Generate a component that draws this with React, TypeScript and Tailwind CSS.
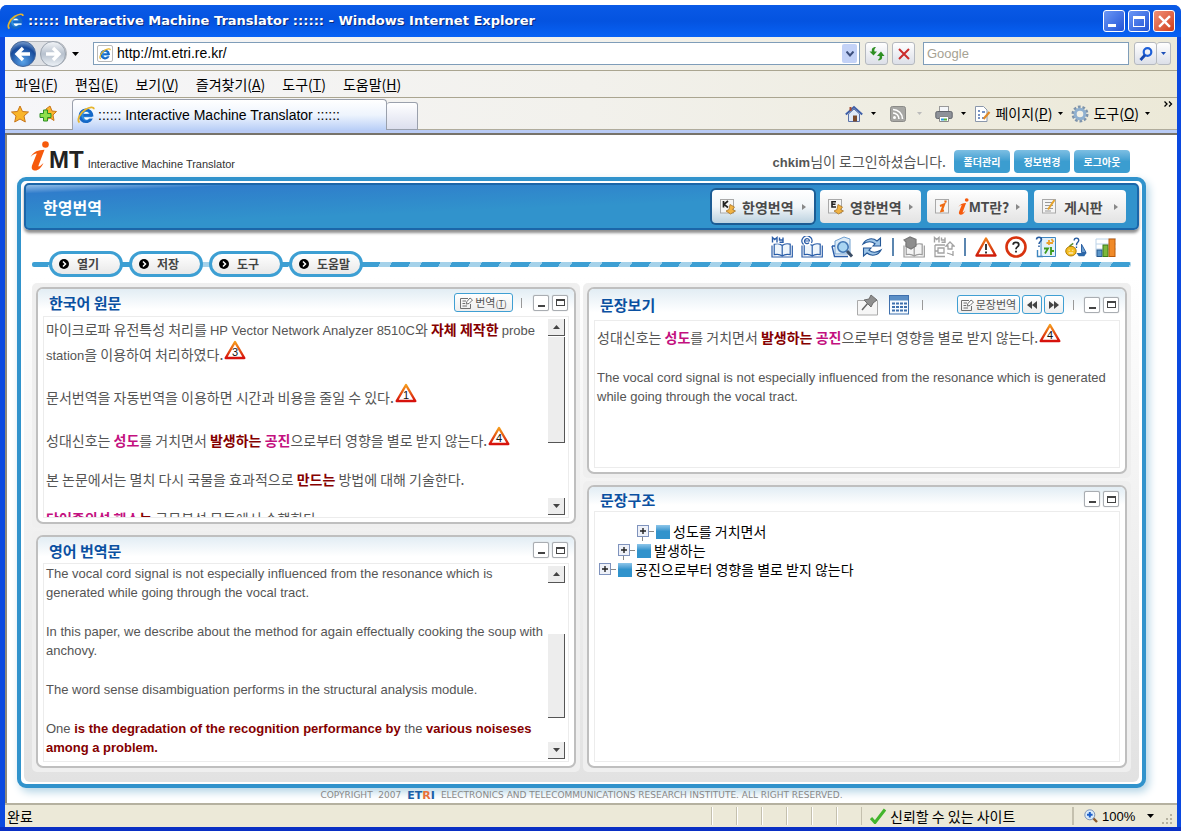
import type { ReactNode } from "react";

const KR = "font-['Noto_Sans_CJK_KR',sans-serif]";
const EN = "font-['Liberation_Sans',sans-serif]";

function IeLogo({ className }: { className?: string }) {
  return (
    <svg viewBox="0 0 18 18" className={className} aria-hidden="true">
      <circle cx="9" cy="9.500" r="6.500" fill="#2f8fe0" />
      <path d="M14.600 12A6 6 0 1 1 15 9.300H6.500" fill="none" stroke="#1668c7" strokeWidth="2.600" />
      <path d="M6.500 7.800C7 5.500 11.500 5.500 12 7.800Z" fill="#fff" />
      <path d="M7 11.200H15.500V12.500H12C10.500 14.500 7.500 14 7 11.200Z" fill="#fff" />
      <path d="M2.500 16.500C-.5 14 3 7 8.500 3.500C12.500 1 17 .3 16.800 3.200" fill="none" stroke="#e7b52c" strokeWidth="1.800" />
    </svg>
  );
}

function ItalicI({ className }: { className?: string }) {
  return (
    <svg viewBox="0 0 20 30" className={className} aria-hidden="true">
      <ellipse cx="16.500" cy="3.500" rx="3.300" ry="3.200" fill="#f65a0c" />
      <path d="M1.500 16C5 10.500 9 9 15.500 8.800L9.500 24.500C9 26.300 10.500 26 14.500 22C12 27.500 8.500 30 5.500 29.500C2.500 29 2.200 26.500 3.400 23.500L7.800 12.500C5.500 12.500 3.500 14 1.500 16Z" fill="#f65a0c" />
    </svg>
  );
}

function Arrow({ className = "fill-black" }: { className?: string }) {
  return (
    <svg viewBox="0 0 7 4" className={`h-1 w-[7px] shrink-0 ${className}`} aria-hidden="true">
      <path d="M0 0H7L3.500 4Z" />
    </svg>
  );
}

function SmallArrow({ className = "fill-black" }: { className?: string }) {
  return (
    <svg viewBox="0 0 5 3" className={`h-[3px] w-[5px] shrink-0 ${className}`} aria-hidden="true">
      <path d="M0 0H5L2.500 3Z" />
    </svg>
  );
}

function Warn({ n }: { n: string }) {
  return (
    <svg viewBox="0 0 22 20" className="-mt-3 ml-px inline-block h-5 w-[22px] align-baseline" role="img" aria-label={n}>
      <defs>
        <linearGradient id={`warn${n}`} x1="0" y1="0" x2="0" y2="1">
          <stop offset="0" stopColor="#f59a1b" />
          <stop offset="1" stopColor="#d6100c" />
        </linearGradient>
      </defs>
      <path d="M11 2L20.300 18H1.700Z" fill="#fff" stroke={`url(#warn${n})`} strokeWidth="2.400" strokeLinejoin="round" />
      <text x="11" y="15.500" textAnchor="middle" fontSize="11" fontFamily="Liberation Sans, sans-serif" fill="#111">{n}</text>
    </svg>
  );
}

function Book({ color, page = "#eef5fb", top }: { color: string; page?: string; top: ReactNode }) {
  return (
    <svg viewBox="0 0 22 22" className="h-[22px] w-[22px]" fill="none" stroke={color} strokeWidth="1.200">
      <path d="M1 9.500V21H21.300V9.500" />
      <path d="M11.200 9.500C9 7.500 6 7.500 3.200 8.200V18.700C6 18 9 18.200 11.200 20C13.500 18.200 16.500 18 19.200 18.700V8.200C16.500 7.500 13.500 7.500 11.200 9.500ZM11.200 9.500V20" fill={page} />
      {top}
    </svg>
  );
}

const myTag = (
  <g>
    <rect x="0" y="0" width="13" height="7.500" fill="#fff" stroke="none" />
    <path d="M1.500 6.500V1.500L3.700 3.500L6 1.500V6.500M8.500 1.500V4H12M12 1.500V6.200H8.500" strokeWidth="1.400" />
  </g>
);
const eTag = (
  <g>
    <circle cx="6" cy="5" r="5" fill="#fff" stroke="none" />
    <path d="M3.500 5H8.500A2.500 2.500 0 1 0 8 6.700M2.500 8.500A5 5 0 1 1 10.500 7" />
  </g>
);

const toolIcons: { label: string; icon: ReactNode }[] = [
  { label: "사용자 사전", icon: <Book color="#2a5da8" top={myTag} /> },
  { label: "전자 사전", icon: <Book color="#2a5da8" top={eTag} /> },
  {
    label: "사전 검색",
    icon: (
      <svg viewBox="0 0 22 22" className="h-[22px] w-[22px]" fill="none">
        <path d="M4 5L13 1L19 3V18H4Z" fill="#dcebf7" stroke="#6f9fd0" />
        <path d="M1 10H4M1 10L3.500 20.500H17" stroke="#2a5da8" strokeWidth="1.400" />
        <circle cx="12" cy="11" r="5.200" fill="#a9d5f2" stroke="#4277b4" strokeWidth="1.600" />
        <path d="M16 15L21 20.500" stroke="#3a4d66" strokeWidth="3" />
      </svg>
    ),
  },
  {
    label: "새로 고침",
    icon: (
      <svg viewBox="0 0 22 22" className="h-[22px] w-[22px]" stroke="#245796" strokeWidth="1.100" fill="#9dc5e8">
        <path d="M2 8C5 2 12 1.500 16 5L19.500 2V10H12L14 7.800C10.500 5 6 5.500 2 8Z" />
        <path d="M20 14C17 20 10 20.500 6 17L2.500 20V12H10L8 14.200C11.500 17 16 16.500 20 14Z" />
      </svg>
    ),
  },
  { label: "|", icon: null },
  { label: "사전 등록", icon: <Book color="#9a9a9a" page="#f4f4f4" top={<path d="M1 4L7 1L13 3.500V10L8 13L3 10.500V6Z" fill="#8d8d8d" stroke="#777" />} /> },
  {
    label: "사용자 문서",
    icon: (
      <svg viewBox="0 0 22 22" className="h-[22px] w-[22px]" fill="none" stroke="#a2a2a2" strokeWidth="1.300">
        {myTag}
        <path d="M2 9H12M2 9V20.500H12M5 12H11V17H5ZM2 15H5" />
        <path d="M17 6L21 10H19V13H15V10H13ZM14 17L20 19M20 15V20" />
      </svg>
    ),
  },
  { label: "|", icon: null },
  {
    label: "경고",
    icon: (
      <svg viewBox="0 0 22 22" className="h-[22px] w-[22px]">
        <defs>
          <linearGradient id="alert" x1="0" y1="0" x2="0" y2="1">
            <stop offset="0" stopColor="#ee7d1c" />
            <stop offset="1" stopColor="#cf1c0c" />
          </linearGradient>
        </defs>
        <path d="M11 2.500L20.500 19.500H1.500Z" fill="#fff" stroke="url(#alert)" strokeWidth="2.400" strokeLinejoin="round" />
        <path d="M11 8V14M11 15.500V17.500" stroke="#222" strokeWidth="1.800" />
      </svg>
    ),
  },
  {
    label: "도움말 보기",
    icon: (
      <svg viewBox="0 0 22 22" className="h-[22px] w-[22px]" fill="none">
        <circle cx="11" cy="11" r="9.500" fill="#fff" stroke="#d8330f" strokeWidth="2.600" />
        <path d="M8.200 8.700C8.200 5.700 13.800 5.700 13.800 8.700C13.800 11 11 10.800 11 13.200M11 14.700V16.500" stroke="#222" strokeWidth="1.800" />
      </svg>
    ),
  },
  {
    label: "문서 번역",
    icon: (
      <svg viewBox="0 0 22 22" className="h-[22px] w-[22px]" fill="none">
        <path d="M6 1.500H20.500V20.500H6Z" fill="#e3f1fb" stroke="#3f86bf" />
        <path d="M1.500 3.500C1.500 .5 6.500 .5 6.500 3.500C6.500 5.500 4 5.500 4 8M4 9.500V11" stroke="#23599e" strokeWidth="1.500" />
        <path d="M14 4V9M11.500 7H18M16.500 3L18.500 6" stroke="#eda12b" strokeWidth="1.800" />
        <path d="M9 12.500H13L10 17.500M16 11V19M16 15H19" stroke="#3c9b1c" strokeWidth="1.800" />
        <path d="M2.500 14V20.500H8" stroke="#3f86bf" strokeWidth="1.400" />
      </svg>
    ),
  },
  {
    label: "학습 도우미",
    icon: (
      <svg viewBox="0 0 24 22" className="h-[22px] w-[22px]" fill="none">
        <ellipse cx="6.500" cy="15.500" rx="5.700" ry="5.300" fill="#f4bd20" stroke="#a87300" />
        <path d="M4 14.500H5M8 14.500H9M4 17.500H9" stroke="#fff" strokeWidth="1.200" />
        <path d="M5 10L9 7" stroke="#5b8b2c" strokeWidth="1.500" />
        <path d="M10 4C10 .5 15 .5 15 4C15 6 12.500 6 12.500 9M12.500 10.500V12" stroke="#23599e" strokeWidth="1.500" />
        <path d="M18 8V17H23Z" fill="#6c9fd0" stroke="#23599e" />
        <path d="M12.500 17.500H23.500L21 21H15Z" fill="#2a67a8" />
      </svg>
    ),
  },
  {
    label: "통계",
    icon: (
      <svg viewBox="0 0 22 22" className="h-[22px] w-[22px]">
        <path d="M1 20V3H21M1 8H21M1 13H21" stroke="#bcd3e8" fill="none" />
        <rect x="2" y="14" width="5" height="6.500" fill="#5d96c9" stroke="#24598f" />
        <rect x="8" y="9" width="5" height="11.500" fill="#7cb83c" stroke="#3d7d1a" />
        <rect x="14" y="3" width="6" height="17.500" fill="#f08a28" stroke="#b95a0c" />
      </svg>
    ),
  },
];

function NavGlyph({ letter }: { letter: "K" | "E" | "i" | "memo" }) {
  return (
    <svg viewBox="0 0 16 17" className="h-[17px] w-4 shrink-0" fill="none" aria-hidden="true">
      <rect x=".5" y="1.500" width="13" height="13.500" fill="#f5f5f5" stroke="#a9a9a9" />
      {letter === "K" && <path d="M3.500 3V9.500M8 3L4 6.300L8 9.500" stroke="#222" strokeWidth="1.700" />}
      {letter === "E" && <path d="M8 3.700H4V9H8M4 6.300H7.500" stroke="#222" strokeWidth="1.600" />}
      {(letter === "K" || letter === "E") && (
        <path d="M10 6.500L14.500 9L12.500 11.500L15.500 13L10.500 16L6 13L9 11.500Z" fill="#f1b343" stroke="#a8752a" strokeWidth=".8" />
      )}
      {letter === "i" && <path d="M10.500 2.500V4.500M5 8L9 6.500L6.500 13L9 12.500" stroke="#ef6a12" strokeWidth="2.200" />}
      {letter === "memo" && (
        <g>
          <path d="M3 4.500H11M3 7.500H11M3 10.500H11M3 13H9" stroke="#999" />
          <path d="M12.500 2L6 11.500" stroke="#e5a32c" strokeWidth="2" />
        </g>
      )}
    </svg>
  );
}

function NavButton({ glyph, children, active, width }: { glyph: "K" | "E" | "i" | "memo"; children: ReactNode; active?: boolean; width: string }) {
  return (
    <button
      className={`flex h-[33px] items-center gap-[6px] rounded-[4px] px-2 ${width} ${
        active
          ? "bg-linear-to-b from-white via-[#f2f6f9] to-[#bcd2e0] ring-2 ring-[#1c5c94]"
          : "bg-linear-to-b from-white to-[#e3e3e3]"
      }`}
    >
      <NavGlyph letter={glyph} />
      <span className="flex flex-1 items-center text-[14px] leading-none font-bold whitespace-nowrap text-[#4a4a4a]">{children}</span>
      <svg viewBox="0 0 4 6" className="h-[6px] w-1 shrink-0 fill-[#888]" aria-hidden="true">
        <path d="M0 0L4 3L0 6Z" />
      </svg>
    </button>
  );
}

function SizeButtons() {
  return (
    <div className="flex gap-[3px]">
      <button aria-label="최소화" className="flex h-4 w-4 items-end justify-center rounded-[2px] border border-[#a9adb2] bg-white pb-[3px] shadow-[0_0_1px_#aaa]">
        <span className="h-[2px] w-[7px] bg-[#444]" />
      </button>
      <button aria-label="최대화" className="flex h-4 w-4 items-center justify-center rounded-[2px] border border-[#a9adb2] bg-white shadow-[0_0_1px_#aaa]">
        <span className="h-[7px] w-[9px] border border-t-2 border-[#444]" />
      </button>
    </div>
  );
}

function EditGlyph() {
  return (
    <svg viewBox="0 0 13 12" className="h-3 w-[13px] shrink-0" fill="none" stroke="#707070" aria-hidden="true">
      <path d="M8 1.500H.5V11.500H10.500V7M2.500 4H6M2.500 6.500H5M2.500 9H7" />
      <path d="M6 7L7 4.500L10 1L12.500 3L9 6.500Z" fill="#fff" />
    </svg>
  );
}

function Divider({ className }: { className: string }) {
  return <span className={`block h-[10px] w-px bg-[#999] ${className}`} />;
}

const smallButton = "flex h-[19px] items-center justify-center rounded-[3px] border border-[#3f9fd3] bg-linear-to-b from-white to-[#eeeeee]";

function Panel({ title, tools, head, outer, children }: { title: string; tools?: ReactNode; head: string; outer: string; children: ReactNode }) {
  return (
    <section className={`flex flex-col rounded-[5px] bg-[#efefef] p-1 ${outer}`}>
      <div className="flex min-h-0 flex-1 flex-col rounded-[7px] border-2 border-[#bfbfbf] bg-white px-[5px] pb-1">
        <header className={`-mx-[5px] flex shrink-0 items-center justify-between rounded-t-[5px] bg-linear-to-b from-[#e2edf4] to-white to-75% pr-[6px] pl-[11px] ${head}`}>
          <h2 className="text-[15px] leading-none font-bold text-[#0a50a1]">{title}</h2>
          <div className="flex items-center">
            {tools}
            <SizeButtons />
          </div>
        </header>
        <div className="flex min-h-0 flex-1 border border-[#ececec]">{children}</div>
      </div>
    </section>
  );
}

function ScrollBar({ offset, thumb }: { offset: string; thumb: string }) {
  const edge = "w-[17px] shrink-0 border-r border-b border-[#555] bg-[#ededed]";
  return (
    <div className="flex w-5 shrink-0 flex-col py-[2px]">
      <button aria-label="위로" className={`flex h-[17px] items-center justify-center ${edge}`}>
        <Arrow className="rotate-180 fill-[#444]" />
      </button>
      <div className={`${edge} ${offset} ${thumb}`} />
      <button aria-label="아래로" className={`mt-auto flex h-[17px] items-center justify-center ${edge}`}>
        <Arrow className="fill-[#444]" />
      </button>
    </div>
  );
}

const Pink = ({ children }: { children: ReactNode }) => <b className="text-[#c3117f]">{children}</b>;
const Red = ({ children }: { children: ReactNode }) => <b className="text-[#850000]">{children}</b>;
const En = ({ children }: { children: ReactNode }) => <span className={`${EN} text-[13px] leading-none`}>{children}</span>;

function SourceSentence() {
  return (
    <>
      성대신호는 <Pink>성도</Pink>를 거치면서 <Red>발생하는</Red> <Pink>공진</Pink>으로부터 영향을 별로 받지 않는다.
      <Warn n="4" />
    </>
  );
}

function TreeRow({ indent, linked, children }: { indent: string; linked?: boolean; children: string }) {
  return (
    <li className={`flex h-[19px] items-center ${indent}`}>
      <button aria-label="펼치기" className="h-[19px] w-[19px]">
        <svg viewBox="0 0 19 19" className="h-[19px] w-[19px]" fill="none">
          <rect x=".5" y="3.500" width="11" height="11" fill="#eef1f8" stroke="#7f93bd" />
          <path d="M3 9H9M6 6V12" stroke="#222" strokeWidth="1.400" />
          <path d={linked ? "M12 9.500H17M5.500 15V19" : "M12 9.500H17"} stroke="#888" />
        </svg>
      </button>
      <span className="h-[14px] w-[14px] bg-linear-to-b from-[#8cc6ea] via-[#3193cc] via-45% to-[#3193cc]" />
      <span className="ml-[3px] whitespace-nowrap">{children}</span>
    </li>
  );
}

function MenuItem({ label, letter }: { label: string; letter: string }) {
  return (
    <button className="whitespace-nowrap">
      {label}(<u>{letter}</u>)
    </button>
  );
}

const squareButton = "flex h-[23px] w-[23px] items-center justify-center rounded-[3px] border border-[#b5b9bf] bg-linear-to-b from-white to-[#dcdfe8]";

function BrowserChrome() {
  return (
    <>
      <div className="flex h-8 items-center rounded-t-[7px] bg-linear-to-b from-[#0a5ae6] via-[#0453e0] via-50% to-[#0862f5] pr-[6px] pl-[7px]">
        <IeLogo className="mr-1 h-[17px] w-[17px]" />
        <h1 className="flex-1 truncate font-['DejaVu_Sans',sans-serif] text-[13px] font-bold text-white [text-shadow:1px_1px_#0a2a7a]">
          :::::: Interactive Machine Translator :::::: - Windows Internet Explorer
        </h1>
        <div className="flex gap-[3px]">
          <button aria-label="창 최소화" className="flex h-[22px] w-[22px] items-end rounded-[3px] border border-white bg-linear-to-br from-[#6b96f5] to-[#2353d6] pb-1 pl-1">
            <span className="h-[3px] w-2 bg-white" />
          </button>
          <button aria-label="창 최대화" className="flex h-[22px] w-[22px] items-center justify-center rounded-[3px] border border-white bg-linear-to-br from-[#6b96f5] to-[#2353d6]">
            <span className="h-[11px] w-3 border border-t-[3px] border-white" />
          </button>
          <button aria-label="창 닫기" className="flex h-[22px] w-[22px] items-center justify-center rounded-[3px] border border-white bg-linear-to-br from-[#f09078] to-[#cf3a10]">
            <svg viewBox="0 0 12 12" className="h-[13px] w-[13px]">
              <path d="M1 1L11 11M11 1L1 11" stroke="#fff" strokeWidth="2.200" />
            </svg>
          </button>
        </div>
      </div>

      <div className="mr-1 ml-[5px] bg-linear-to-r from-[#f6f6f9] via-[#f2f1ec] to-[#ece9d8] text-[14px] text-black">
        <div className="flex h-[34px] items-center border-b border-[#aaa590] pr-[6px] pl-[5px]">
          <svg viewBox="0 0 58 28" className="h-7 w-[58px] shrink-0" role="img" aria-label="뒤로 앞으로">
            <defs>
              <radialGradient id="back" cx=".5" cy=".8" r=".8">
                <stop offset="0" stopColor="#5aa4ea" />
                <stop offset=".7" stopColor="#174a9b" />
                <stop offset="1" stopColor="#7da0cf" />
              </radialGradient>
              <linearGradient id="forward" x1="0" y1="0" x2="0" y2="1">
                <stop offset="0" stopColor="#f4f6f9" />
                <stop offset=".5" stopColor="#b7c1ce" />
                <stop offset="1" stopColor="#eef3f8" />
              </linearGradient>
            </defs>
            <rect x=".5" y="1.500" width="56" height="24" rx="12" fill="#dfe1e5" stroke="#b4b7bc" />
            <circle cx="13" cy="14" r="12.500" fill="url(#back)" stroke="#45689d" />
            <circle cx="43" cy="14" r="12.500" fill="url(#forward)" stroke="#9aa3af" />
            <path d="M20 14H8M13 8L7 14L13 20" fill="none" stroke="#fff" strokeWidth="3.400" />
            <path d="M36 14H48M43 8L49 14L43 20" fill="none" stroke="#fff" strokeWidth="3.400" />
          </svg>
          <span className="mr-[14px] ml-1"><Arrow /></span>
          <div className="flex h-[23px] flex-1 items-center border border-[#7f9db9] bg-white pr-[2px] pl-[3px]">
            <span className="mr-1 flex h-[17px] w-4 items-center justify-center rounded-[2px] border border-[#b9b9b9]">
              <IeLogo className="h-3 w-3" />
            </span>
            <input aria-label="주소" defaultValue="http://mt.etri.re.kr/" className={`min-w-0 flex-1 bg-transparent text-[14px] outline-none ${EN}`} />
            <button aria-label="주소 목록" className="flex h-[19px] w-[15px] items-center justify-center rounded-[2px] bg-[#c3d2f7]">
              <svg viewBox="0 0 8 6" className="h-[6px] w-2"><path d="M.5 .5L4 4.500L7.500 .5" fill="none" stroke="#3c4f7c" strokeWidth="2" /></svg>
            </button>
          </div>
          <button aria-label="새로 고침" className={`ml-[5px] ${squareButton}`}>
            <svg viewBox="0 0 16 16" className="h-4 w-4" fill="#2e8f22">
              <path d="M6 1C3 1.500 2.500 3.500 3 5.500H.5L4.500 9.500L8 5.500H5.500C5 3.500 5.500 2.500 7 1.500Z" />
              <path d="M9.500 14.500C13 14 13.500 12 13 10H15.500L12 5.500L8 10H10.500C11 12 10.500 13 9 13.700Z" />
            </svg>
          </button>
          <button aria-label="중지" className={`ml-1 ${squareButton}`}>
            <svg viewBox="0 0 12 12" className="h-3 w-3"><path d="M1 1L11 11M11 1L1 11" stroke="#cb2c2c" strokeWidth="2" /></svg>
          </button>
          <input aria-label="검색" placeholder="Google" className={`ml-2 h-[23px] w-[206px] border border-[#7f9db9] bg-white px-[3px] text-[13px] outline-none placeholder:text-[#a6a293] ${EN}`} />
          <button aria-label="검색 실행" className={`ml-[5px] ${squareButton}`}>
            <svg viewBox="0 0 14 14" className="h-[14px] w-[14px]" fill="none"><circle cx="8.500" cy="5" r="3.800" stroke="#1d5fd8" strokeWidth="2.200" /><path d="M6 8L1.500 13" stroke="#1547b0" strokeWidth="2.800" /></svg>
          </button>
          <button aria-label="검색 옵션" className="flex h-[23px] w-[14px] items-center justify-center rounded-[3px] border border-l-0 border-[#b5b9bf] bg-linear-to-b from-white to-[#dcdfe8]">
            <SmallArrow className="fill-[#1d4fb8]" />
          </button>
        </div>

        <nav className="flex h-[27px] items-center gap-[17px] border-b border-[#aaa590] pl-[10px]">
          <MenuItem label="파일" letter="F" />
          <MenuItem label="편집" letter="E" />
          <MenuItem label="보기" letter="V" />
          <MenuItem label="즐겨찾기" letter="A" />
          <MenuItem label="도구" letter="T" />
          <MenuItem label="도움말" letter="H" />
        </nav>

        <div className="flex h-[37px] flex-col">
          <div className="flex h-8 items-end">
            <div className="flex h-8 w-[67px] shrink-0 items-center gap-[10px] border-b border-[#9a9a9a] pl-[6px]">
              <svg viewBox="0 0 18 18" className="h-[18px] w-[18px]"><path d="M9 1L11.500 6.500L17.500 7L13 11L14.300 17L9 14L3.700 17L5 11L.5 7L6.500 6.500Z" fill="#f9b52a" stroke="#c9761a" /></svg>
              <svg viewBox="0 0 18 18" className="h-[18px] w-[18px]">
                <path d="M11 1L13 6L17.500 6.500L14 10L15 15.500L11 13L7 15L7 4Z" fill="#f9b52a" stroke="#c9761a" />
                <path d="M4.500 5H8.500V8.500H12V12.500H8.500V16H4.500V12.500H1V8.500H4.500Z" fill="#8fe04a" stroke="#2c8f22" />
              </svg>
            </div>
            <div className={`flex h-[31px] w-[315px] shrink-0 items-center rounded-t-[4px] border border-b-0 border-[#9aa0ac] bg-linear-to-b from-white via-[#eef4fd] to-[#b9cff7] pl-1 ${EN}`}>
              <IeLogo className="mr-[3px] h-[18px] w-[18px]" />
              :::::: Interactive Machine Translator ::::::
            </div>
            <button aria-label="새 탭" className="h-[28px] w-[31px] shrink-0 rounded-t-[3px] border border-l-0 border-[#9aa0ac] bg-linear-to-b from-white to-[#dcdfee]" />
            <div className="flex h-8 flex-1 items-center justify-end border-b border-[#b0ac9c] pr-1">
              <svg viewBox="0 0 18 18" className="h-[18px] w-[18px]">
                <path d="M3.500 9V16.500H14.500V9L9 4Z" fill="#dfe9f8" stroke="#5b72a8" />
                <path d="M.8 9.500L9 2L17.200 9.500" fill="none" stroke="#3f5fa8" strokeWidth="2" />
                <rect x="8" y="10.500" width="4" height="6" fill="#7b4a2b" />
                <rect x="4.500" y="2" width="2" height="4" fill="#a34a32" />
              </svg>
              <span className="ml-2"><SmallArrow /></span>
              <svg viewBox="0 0 16 16" className="ml-[14px] h-4 w-4">
                <rect x=".5" y=".5" width="15" height="15" rx="2" fill="#a7a7a4" stroke="#8b8b88" />
                <circle cx="4.500" cy="11.500" r="1.500" fill="#fff" />
                <path d="M3 7A6 6 0 0 1 9 13M3 3.500A9.500 9.500 0 0 1 12.500 13" fill="none" stroke="#fff" strokeWidth="1.600" />
              </svg>
              <span className="ml-[11px]"><SmallArrow className="fill-[#bbb]" /></span>
              <svg viewBox="0 0 18 18" className="ml-[13px] h-[18px] w-[18px]">
                <rect x="4.500" y="1.500" width="9" height="6" fill="#f4f6f9" stroke="#999" />
                <rect x=".8" y="6.500" width="16.400" height="7" rx="1.500" fill="#8e9299" stroke="#61656c" />
                <path d="M4.500 11.500H13.500V16.500H4.500Z" fill="#fff" stroke="#888" />
                <path d="M6 14.500H9" stroke="#2f9bd8" strokeWidth="2" /><path d="M9 14.500H12" stroke="#58b23c" strokeWidth="2" />
              </svg>
              <span className="ml-2"><SmallArrow /></span>
              <svg viewBox="0 0 17 18" className="mr-1 ml-2 h-[18px] w-[17px]">
                <path d="M1.500 1.500H9.500L13 5V16.500H1.500Z" fill="#fff" stroke="#8a97ab" />
                <path d="M4 6H6M8 7H11M4 10H6M4 13H6M8 13H10" stroke="#4a6fb0" strokeWidth="1.300" />
                <path d="M15.500 7L9.500 14" stroke="#e08a28" strokeWidth="2.200" />
              </svg>
              <MenuItem label="페이지" letter="P" />
              <span className="mr-2 ml-[6px]"><SmallArrow /></span>
              <svg viewBox="0 0 18 18" className="mr-1 h-[18px] w-[18px]" fill="none">
                <circle cx="9" cy="9" r="7.200" stroke="#7d93ab" strokeWidth="2.600" strokeDasharray="2.700 1.820" />
                <circle cx="9" cy="9" r="4.800" fill="#f1f0e6" stroke="#8fb0d0" strokeWidth="3" />
              </svg>
              <MenuItem label="도구" letter="O" />
              <span className="mr-[14px] ml-[6px]"><SmallArrow /></span>
              <svg viewBox="0 0 9 6" className="mb-5 h-[6px] w-[9px]" fill="none" stroke="#000" strokeWidth="1.300"><path d="M.5 .5L3 3L.5 5.500M5 .5L7.500 3L5 5.500" /></svg>
            </div>
          </div>
          <div className="flex-1 border-b-2 border-[#77736a] bg-[#b9cbf5]" />
        </div>
      </div>
    </>
  );
}

function AccountButton({ children }: { children: string }) {
  return (
    <button className="h-[23px] w-14 rounded-[4px] bg-linear-to-b from-[#7dbfe3] to-[#3b9dd0] to-50% text-[10px] leading-none font-bold text-white">
      {children}
    </button>
  );
}

function StatusBar() {
  return (
    <footer className="mr-1 ml-[5px] flex h-6 items-center border-t-2 border-[#b5b1a0] bg-[#ece9d8] pr-1 pl-[2px] text-[14px] leading-none text-black">
      <span className="flex-1">완료</span>
      <div className="flex">
        {[0, 1, 2, 3, 4, 5].map((i) => (
          <span key={i} className="h-[18px] w-[25px] border-l border-[#c4c0ae] shadow-[inset_1px_0_#fff]" />
        ))}
      </div>
      <div className="flex h-[18px] w-[211px] items-center border-l border-[#c4c0ae] pl-2">
        <svg viewBox="0 0 16 16" className="mr-1 h-4 w-4"><path d="M1 10L5 14.500L15 1.500" fill="none" stroke="#43b52c" strokeWidth="3" /></svg>
        신뢰할 수 있는 사이트
      </div>
      <div className="flex h-[18px] w-[101px] items-center border-l-2 border-[#c4c0ae] pl-[10px]">
        <svg viewBox="0 0 14 14" className="mr-1 h-[14px] w-[14px]" fill="none">
          <path d="M9 9L13 13" stroke="#8a5a2c" strokeWidth="2.400" />
          <circle cx="5.800" cy="5.800" r="5" fill="#d9ebfa" stroke="#7d93b5" />
          <path d="M3 5.800H8.600M5.800 3V8.600" stroke="#1d5fc8" strokeWidth="2" />
        </svg>
        <span className={`text-[13px] ${EN}`}>100%</span>
        <span className="ml-3"><Arrow /></span>
        <svg viewBox="0 0 12 12" className="mt-2 ml-auto h-3 w-3 fill-[#b5b19f]">
          <path d="M9 0H11V2H9ZM5 4H7V6H5ZM9 4H11V6H9ZM1 8H3V10H1ZM5 8H7V10H5ZM9 8H11V10H9Z" />
        </svg>
      </div>
    </footer>
  );
}

export default function App() {
  return (
    <div className={`flex min-h-screen flex-col bg-white pt-[5px] pr-[3px] text-[#555] ${KR}`}>
      <div className="flex flex-1 flex-col rounded-t-[7px] border-b-4 border-[#0a2fc4] bg-[#0b49e0]">
        <BrowserChrome />

        <main className="mr-1 ml-[5px] flex flex-1 flex-col border-l-2 border-[#8c887c] bg-white pr-[31px] pl-[10px]">
          <div className="flex h-[42px] items-end justify-between pr-4 pl-3">
            <div className="flex items-end pb-[6px]">
              <ItalicI className="h-[30px] w-5" />
              <span className="text-[24px] leading-[23px] font-bold text-[#222] font-['Liberation_Sans_Narrow','Liberation_Sans',sans-serif]">MT</span>
              <span className={`ml-1 text-[11px] leading-[14px] text-[#333] ${EN}`}>Interactive Machine Translator</span>
            </div>
            <div className="flex items-center gap-1 pb-1">
              <span className="mr-1 text-[14px] leading-none">
                <b className={`text-[13px] font-bold ${EN}`}>chkim</b>님이 로그인하셨습니다.
              </span>
              <AccountButton>폴더관리</AccountButton>
              <AccountButton>정보변경</AccountButton>
              <AccountButton>로그아웃</AccountButton>
            </div>
          </div>

          <div className="flex flex-1 flex-col rounded-[9px] border-4 border-[#3193cc] bg-white px-[3px] py-[2px] shadow-[3px_4px_8px_#b5d5e6]">
            <div className="flex h-[47px] items-center justify-between rounded-[5px] border-2 border-[#1b66a9] bg-linear-to-br from-[#8fbce6] via-[#2f7dcb] via-10% to-[#3193cc] to-50% pr-[11px] pl-[17px] shadow-[0_3px_3px_#8f8f8f]">
              <h2 className="text-[16px] font-bold text-white">한영번역</h2>
              <div className="flex gap-[6px]">
                <NavButton glyph="K" active width="w-[102px]">한영번역</NavButton>
                <NavButton glyph="E" width="w-[101px]">영한번역</NavButton>
                <NavButton glyph="i" width="w-[101px]">
                  <ItalicI className="h-[17px] w-3" />
                  <span className="font-['Liberation_Sans_Narrow','Liberation_Sans',sans-serif]">MT</span>란?
                </NavButton>
                <NavButton glyph="memo" width="w-[92px]">게시판</NavButton>
              </div>
            </div>

            <div className="relative mx-2 mt-[6px] flex h-[41px] items-end justify-between pr-[14px] pl-[17px]">
              <div className="absolute inset-x-0 bottom-[10px] h-[5px] rounded-[2px] bg-[repeating-linear-gradient(120deg,#3d9fd3_0_16px,#a5d2ea_16px_26px)]" />
              <div className="relative flex gap-[6px]">
                {["열기", "저장", "도구", "도움말"].map((label) => (
                  <button key={label} className="flex h-[26px] w-[74px] items-center gap-2 rounded-full border-3 border-[#3d9fd3] bg-linear-to-b from-white to-[#e8e8e8] pl-[7px] text-[12px] leading-none font-bold whitespace-nowrap text-[#444]">
                    <svg viewBox="0 0 10 10" className="h-[10px] w-[10px] shrink-0">
                      <circle cx="5" cy="5" r="5" />
                      <path d="M4 2.500L6.500 5L4 7.500" fill="none" stroke="#fff" strokeWidth="1.500" />
                    </svg>
                    {label}
                  </button>
                ))}
              </div>
              <div className="flex items-center gap-2 self-start">
                {toolIcons.map((t, i) =>
                  t.icon ? (
                    <button key={i} aria-label={t.label} title={t.label}>{t.icon}</button>
                  ) : (
                    <span key={i} className="mx-px h-[18px] w-[2px] bg-[#5b86b0]" />
                  )
                )}
              </div>
            </div>

            <div className="flex flex-1 gap-[3px] rounded-b-[6px] bg-linear-to-b from-white to-[#e2e2e2] px-2 pt-[6px] pb-[10px]">
              <div className="flex min-w-0 flex-1 flex-col gap-[3px]">
                <Panel
                  title="한국어 원문"
                  outer="h-[245px] shrink-0"
                  head="h-[27px]"
                  tools={
                    <>
                      <button className={`w-[59px] gap-[2px] text-[11px] ${smallButton}`}>
                        <EditGlyph />
                        <span className="leading-none">번역<small className="text-[9px]">(<u>T</u>)</small></span>
                      </button>
                      <Divider className="mr-[11px] ml-2" />
                    </>
                  }
                >
                  <div className="min-w-0 flex-1 overflow-hidden pl-[2px] text-[14px] leading-[25px]">
                    <p>
                      마이크로파 유전특성 처리를 <En>HP Vector Network Analyzer 8510C</En>와 <Red>자체 제작한</Red> <En>probe station</En>을 이용하여 처리하였다.
                      <Warn n="3" />
                    </p>
                    <p className="mt-[18px]">
                      문서번역을 자동번역을 이용하면 시간과 비용을 줄일 수 있다.
                      <Warn n="1" />
                    </p>
                    <p className="mt-[18px]"><SourceSentence /></p>
                    <p className="mt-[14px]">
                      본 논문에서는 멸치 다시 국물을 효과적으로 <Red>만드는</Red> 방법에 대해 기술한다.
                    </p>
                    <p className="mt-[14px]">
                      <Pink>단어중의성 해소</Pink><Red>는</Red> 구문분석 모듈에서 수행한다.
                    </p>
                  </div>
                  <ScrollBar offset="mt-px" thumb="h-[106px]" />
                </Panel>
                <Panel title="영어 번역문" outer="flex-1" head="h-[26px]">
                  <div className={`min-w-0 flex-1 space-y-5 pl-[2px] text-[13px] leading-[19px] ${EN}`}>
                    <p>The vocal cord signal is not especially influenced from the resonance which is generated while going through the vocal tract.</p>
                    <p>In this paper, we describe about the method for again effectually cooking the soup with anchovy.</p>
                    <p>The word sense disambiguation performs in the structural analysis module.</p>
                    <p>
                      One <Red>is the degradation of the recognition performance by</Red> the <Red>various noiseses among a problem.</Red>
                    </p>
                  </div>
                  <ScrollBar offset="mt-[51px]" thumb="h-[84px]" />
                </Panel>
              </div>

              <div className="flex min-w-0 flex-1 flex-col gap-[3px]">
                <Panel
                  title="문장보기"
                  outer="h-[195px] shrink-0"
                  head="h-[31px]"
                  tools={
                    <>
                      <button aria-label="고정" className="mr-[10px]">
                        <svg viewBox="0 0 22 22" className="h-[22px] w-[22px]">
                          <path d="M.5 6.500H20.500V21H.5Z" fill="#f6f6f6" stroke="#aaa" />
                          <path d="M5 16L11 9" stroke="#666" strokeWidth="1.500" />
                          <path d="M7 6L12 5L14 1L20 6L16 9L14 13Z" fill="#8f8f8f" stroke="#6d6d6d" />
                        </svg>
                      </button>
                      <button aria-label="표 보기">
                        <svg viewBox="0 0 20 20" className="h-5 w-5">
                          <rect x=".5" y=".5" width="19" height="18.500" fill="#f7fbff" stroke="#3f70ad" />
                          <rect x="1" y="1" width="18" height="4.500" fill="#5b8fc6" />
                          <path d="M3 8.500H18M3 12H18M3 15.500H18" stroke="#3f70ad" strokeWidth="2" strokeDasharray="3 1" />
                        </svg>
                      </button>
                      <Divider className="mr-[34px] ml-[13px]" />
                      <button className={`w-[63px] gap-[2px] text-[11px] leading-none ${smallButton}`}>
                        <EditGlyph />
                        문장번역
                      </button>
                      <button aria-label="이전" className={`ml-[2px] w-5 ${smallButton}`}>
                        <svg viewBox="0 0 10 8" className="h-2 w-[10px] fill-[#444]"><path d="M5 0V8L0 4ZM10 0V8L5 4Z" /></svg>
                      </button>
                      <button aria-label="다음" className={`ml-[2px] w-5 ${smallButton}`}>
                        <svg viewBox="0 0 10 8" className="h-2 w-[10px] fill-[#444]"><path d="M0 0V8L5 4ZM5 0V8L10 4Z" /></svg>
                      </button>
                      <Divider className="mr-[10px] ml-[9px]" />
                    </>
                  }
                >
                  <div className="min-w-0 flex-1 pl-[2px]">
                    <p className="mt-1 text-[14px] leading-[25px]"><SourceSentence /></p>
                    <p className={`mt-[18px] text-[13px] leading-[19px] ${EN}`}>
                      The vocal cord signal is not especially influenced from the resonance which is generated while going through the vocal tract.
                    </p>
                  </div>
                </Panel>
                <Panel title="문장구조" outer="flex-1" head="h-6">
                  <ul className="pt-[10px] pl-1 text-[14px] leading-[19px] text-black">
                    <TreeRow indent="ml-[38px]" linked>성도를 거치면서</TreeRow>
                    <TreeRow indent="ml-[19px]" linked>발생하는</TreeRow>
                    <TreeRow indent="ml-0">공진으로부터 영향을 별로 받지 않는다</TreeRow>
                  </ul>
                </Panel>
              </div>
            </div>
          </div>
          <p className="flex h-[15px] items-center justify-center gap-[6px] font-['DejaVu_Sans',sans-serif] text-[9px] leading-none whitespace-pre text-[#888]">
            <span>COPYRIGHT  2007</span>
            <b className="text-[11px] text-[#1b5fa8]">ET<span className="text-[#e8703a]">R</span>I</b>
            <span>ELECTRONICS AND TELECOMMUNICATIONS RESEARCH INSTITUTE. ALL RIGHT RESERVED.</span>
          </p>
        </main>

        <StatusBar />
      </div>
    </div>
  );
}
